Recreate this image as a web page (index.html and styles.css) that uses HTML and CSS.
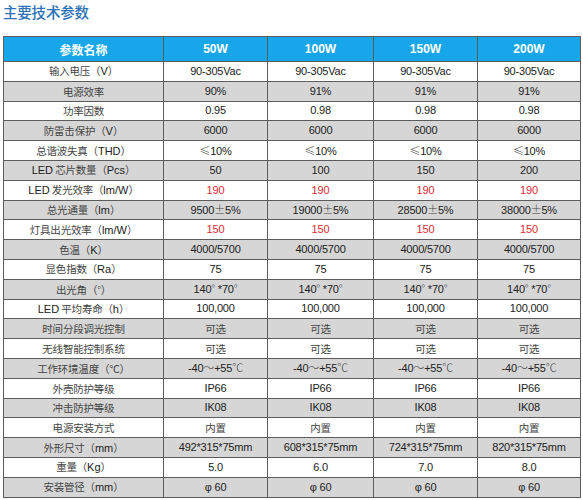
FILE: index.html
```html
<!DOCTYPE html>
<html lang="zh">
<head>
<meta charset="utf-8">
<link rel="stylesheet" href="styles.css">
</head>
<body>
<div class="page">
  <h1 class="title">主要技术参数</h1>
  <table class="spec">
    <colgroup>
      <col class="c-name"><col class="c-v1"><col class="c-v2"><col class="c-v3"><col class="c-v4">
    </colgroup>
    <thead>
      <tr class="head"><th>参数名称</th><th>50W</th><th>100W</th><th>150W</th><th>200W</th></tr>
    </thead>
    <tbody>
      <tr><td class="lbl">输入电压（<span class="lat">V</span>）</td><td>90-305Vac</td><td>90-305Vac</td><td>90-305Vac</td><td>90-305Vac</td></tr>
      <tr><td class="lbl">电源效率</td><td>90%</td><td>91%</td><td>91%</td><td>91%</td></tr>
      <tr><td class="lbl">功率因数</td><td>0.95</td><td>0.98</td><td>0.98</td><td>0.98</td></tr>
      <tr><td class="lbl">防雷击保护（<span class="lat">V</span>）</td><td>6000</td><td>6000</td><td>6000</td><td>6000</td></tr>
      <tr><td class="lbl">总谐波失真（<span class="lat">THD</span>）</td><td><span class="sym">≤</span>10%</td><td><span class="sym">≤</span>10%</td><td><span class="sym">≤</span>10%</td><td><span class="sym">≤</span>10%</td></tr>
      <tr><td class="lbl"><span class="lat">LED</span> 芯片数量（<span class="lat">Pcs</span>）</td><td>50</td><td>100</td><td>150</td><td>200</td></tr>
      <tr><td class="lbl"><span class="lat">LED</span> 发光效率（<span class="lat">lm/W</span>）</td><td class="red">190</td><td class="red">190</td><td class="red">190</td><td class="red">190</td></tr>
      <tr><td class="lbl">总光通量（<span class="lat">lm</span>）</td><td>9500<span class="sym">±</span>5%</td><td>19000<span class="sym">±</span>5%</td><td>28500<span class="sym">±</span>5%</td><td>38000<span class="sym">±</span>5%</td></tr>
      <tr><td class="lbl">灯具出光效率（<span class="lat">lm/W</span>）</td><td class="red">150</td><td class="red">150</td><td class="red">150</td><td class="red">150</td></tr>
      <tr><td class="lbl">色温（<span class="lat">K</span>）</td><td>4000/5700</td><td>4000/5700</td><td>4000/5700</td><td>4000/5700</td></tr>
      <tr><td class="lbl">显色指数（<span class="lat">Ra</span>）</td><td>75</td><td>75</td><td>75</td><td>75</td></tr>
      <tr><td class="lbl">出光角（<span class="sym">°</span>）</td><td>140<span class="sym">°</span> *70<span class="sym">°</span></td><td>140<span class="sym">°</span> *70<span class="sym">°</span></td><td>140<span class="sym">°</span> *70<span class="sym">°</span></td><td>140<span class="sym">°</span> *70<span class="sym">°</span></td></tr>
      <tr><td class="lbl"><span class="lat">LED</span> 平均寿命（<span class="lat">h</span>）</td><td>100,000</td><td>100,000</td><td>100,000</td><td>100,000</td></tr>
      <tr><td class="lbl">时间分段调光控制</td><td class="cj">可选</td><td class="cj">可选</td><td class="cj">可选</td><td class="cj">可选</td></tr>
      <tr><td class="lbl">无线智能控制系统</td><td class="cj">可选</td><td class="cj">可选</td><td class="cj">可选</td><td class="cj">可选</td></tr>
      <tr><td class="lbl">工作环境温度（℃）</td><td>-40<span class="sym">～</span>+55<span class="sym">℃</span></td><td>-40<span class="sym">～</span>+55<span class="sym">℃</span></td><td>-40<span class="sym">～</span>+55<span class="sym">℃</span></td><td>-40<span class="sym">～</span>+55<span class="sym">℃</span></td></tr>
      <tr><td class="lbl">外壳防护等级</td><td>IP66</td><td>IP66</td><td>IP66</td><td>IP66</td></tr>
      <tr><td class="lbl">冲击防护等级</td><td>IK08</td><td>IK08</td><td>IK08</td><td>IK08</td></tr>
      <tr><td class="lbl">电源安装方式</td><td class="cj">内置</td><td class="cj">内置</td><td class="cj">内置</td><td class="cj">内置</td></tr>
      <tr><td class="lbl">外形尺寸（<span class="lat">mm</span>）</td><td>492*315*75mm</td><td>608*315*75mm</td><td>724*315*75mm</td><td>820*315*75mm</td></tr>
      <tr><td class="lbl">重量（<span class="lat">Kg</span>）</td><td>5.0</td><td>6.0</td><td>7.0</td><td>8.0</td></tr>
      <tr><td class="lbl">安装管径（<span class="lat">mm</span>）</td><td>φ 60</td><td>φ 60</td><td>φ 60</td><td>φ 60</td></tr>
    </tbody>
  </table>
</div>
</body>
</html>
```

FILE: styles.css
```css
html, body {
  margin: 0;
  padding: 0;
  background: #ffffff;
}

.page {
  padding: 2px 0 0 3px;
  font-family: "Liberation Sans", Arial, "Noto Sans CJK SC", sans-serif;
}

.title {
  margin: 0 0 15px 0;
  font-family: "Noto Sans CJK SC", sans-serif;
  font-size: 14.5px;
  line-height: 19px;
  font-weight: 500;
  color: #2f72b8;
  letter-spacing: -0.2px;
}

.spec {
  width: 577px;
  border-collapse: collapse;
  table-layout: fixed;
  font-size: 11px;
  color: #222222;
}

.c-name { width: 160px; }
.c-v1 { width: 104px; }
.c-v2 { width: 106px; }
.c-v3 { width: 104px; }
.c-v4 { width: 103px; }

.spec th,
.spec td {
  border: 1px solid #5c5c5c;
  padding: 0;
  text-align: center;
  vertical-align: middle;
  white-space: nowrap;
  overflow: hidden;
}

.head {
  height: 25px;
  background: #18a6ea;
}

.head th {
  color: #ffffff;
  font-size: 12px;
  font-weight: bold;
}

.spec tbody tr {
  height: 19.8px;
}

.spec tbody tr:nth-child(even) {
  background: #d6d6d6;
}

.spec td {
  line-height: 13px;
  letter-spacing: -0.2px;
}

.lbl {
  font-family: "Noto Sans CJK SC", sans-serif;
  font-size: 10.5px;
  color: #444444;
  font-weight: 400;
  letter-spacing: 0.3px;
}

.lat {
  font-family: "Liberation Sans", Arial, sans-serif;
  font-size: 11px;
  font-weight: normal;
  color: #222222;
  letter-spacing: 0;
}

.cj {
  font-family: "Noto Sans CJK SC", sans-serif;
  font-size: 10.5px;
  font-weight: 400;
  color: #444444;
}

.sym {
  font-family: "Noto Sans CJK SC", sans-serif;
  font-weight: 300;
  color: #444444;
}

.red {
  color: #de2b33;
}
```
